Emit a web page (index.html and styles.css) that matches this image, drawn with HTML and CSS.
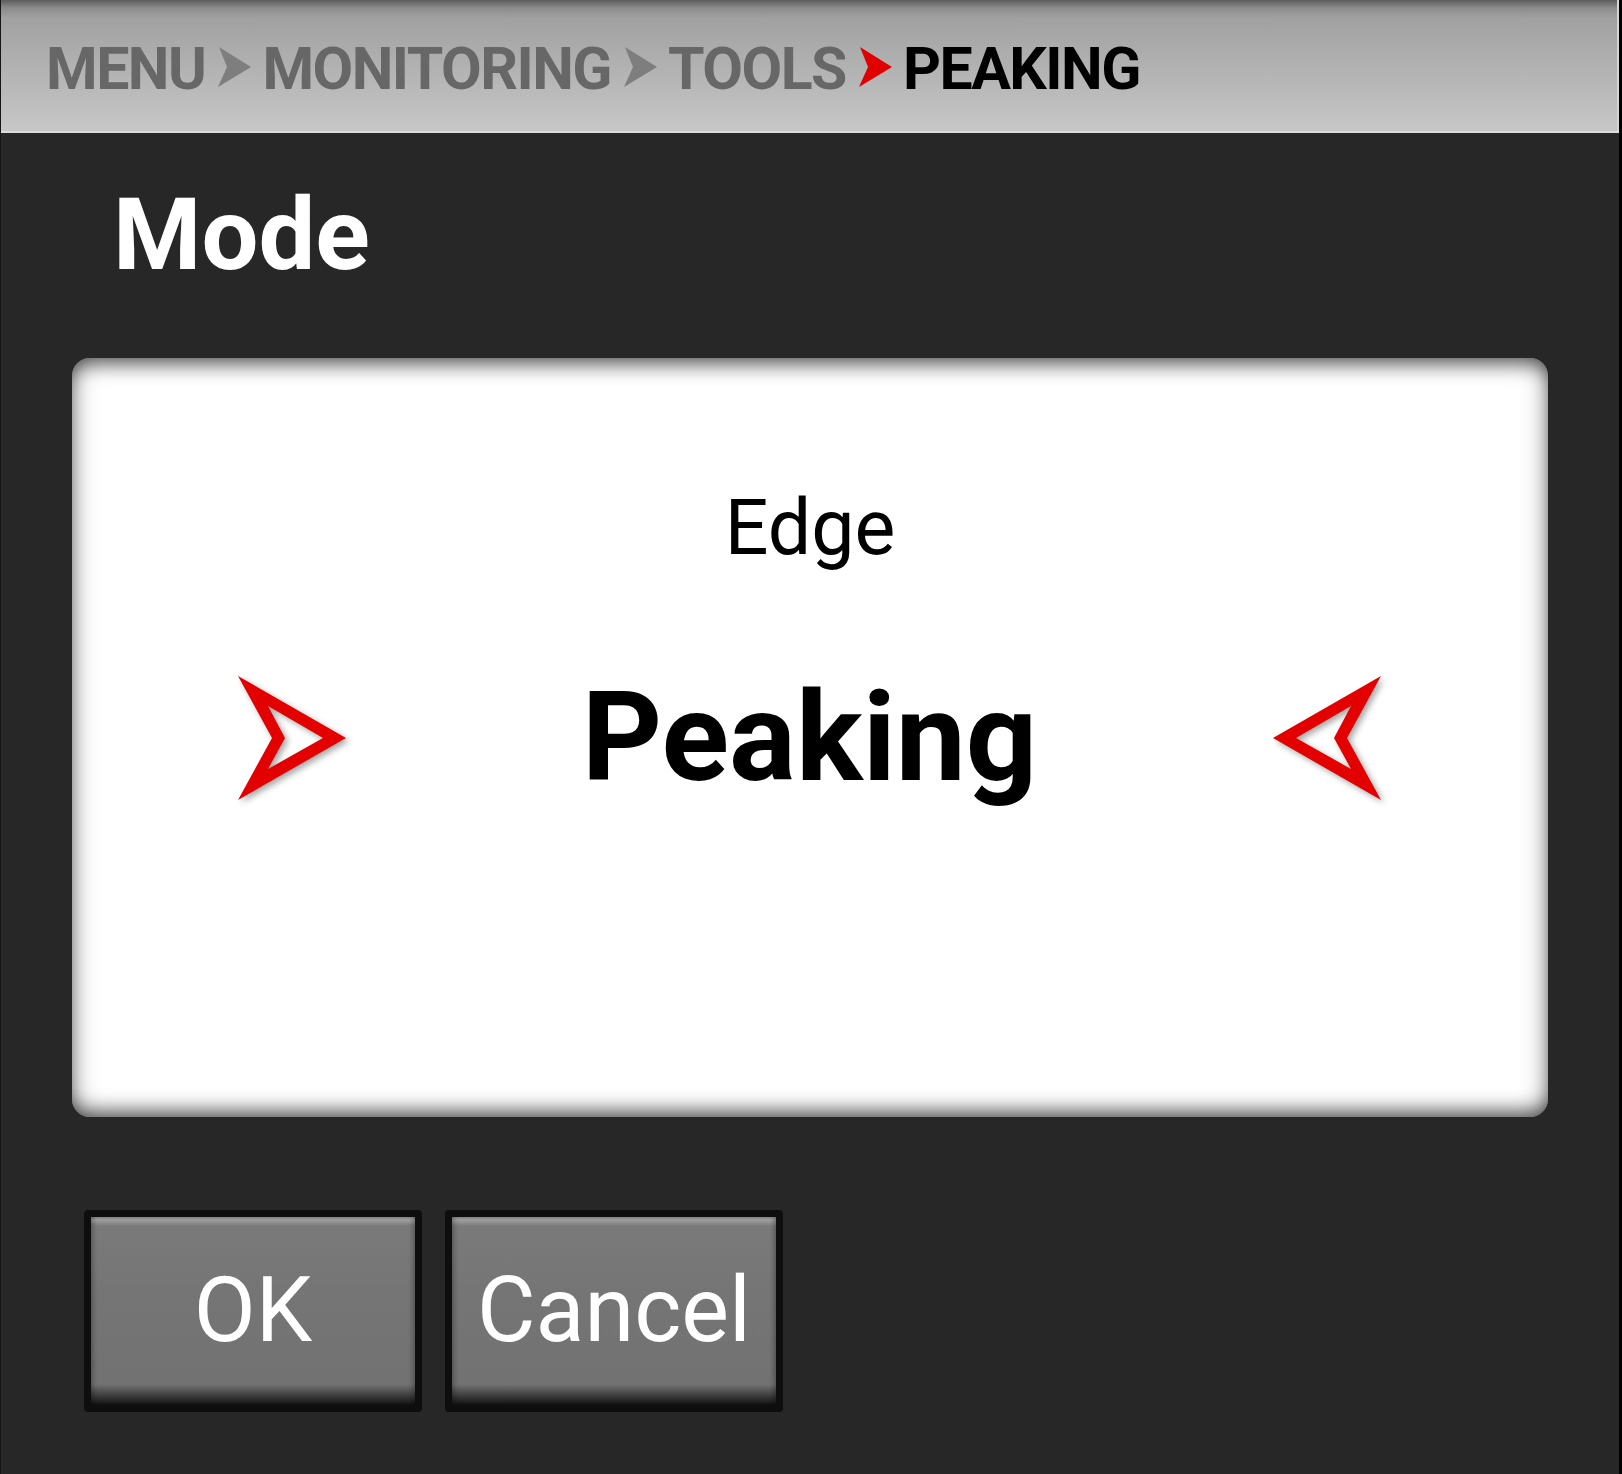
FILE: index.html
```html
<!DOCTYPE html>
<html lang="en">
<head>
  <meta charset="UTF-8">
  <meta name="viewport" content="width=device-width, initial-scale=1.0">
  <title>Peaking Mode</title>
  <link rel="stylesheet" href="styles.css">
</head>
<body>
  <div class="screen">
    <div class="crumbs">
      <span class="crumb">MENU</span>
      <svg class="sep" viewBox="0 0 33 40" width="33" height="40"><polygon points="1,0 33,20 0,40 9,20"/></svg>
      <span class="crumb">MONITORING</span>
      <svg class="sep" viewBox="0 0 33 40" width="33" height="40"><polygon points="1,0 33,20 0,40 9,20"/></svg>
      <span class="crumb">TOOLS</span>
      <svg class="sep sep-current" viewBox="0 0 33 40" width="33" height="40"><polygon points="1,0 33,20 0,40 9,20"/></svg>
      <span class="crumb crumb-current">PEAKING</span>
    </div>

    <div class="content">
      <h1 class="title">Mode</h1>

      <div class="picker">
        <div class="option">Edge</div>
        <div class="picker-row">
          <svg class="arrow" viewBox="0 0 108 124" width="108" height="124">
            <path fill-rule="evenodd" d="M0 0 L108 62 L0 124 L34 62 Z M30 30 L47 62 L30 93 L85 62 Z"/>
          </svg>
          <div class="selected">Peaking</div>
          <svg class="arrow" viewBox="0 0 108 124" width="108" height="124">
            <path fill-rule="evenodd" d="M108 0 L0 62 L108 124 L74 62 Z M78 30 L61 62 L78 93 L23 62 Z"/>
          </svg>
        </div>
      </div>

      <div class="buttons">
        <button class="btn">OK</button>
        <button class="btn">Cancel</button>
      </div>
    </div>
  </div>
</body>
</html>
```

FILE: styles.css
```css
body {
  margin: 0;
  padding: 0;
  background-color: #000;
  font-family: Roboto, "Liberation Sans", sans-serif;
}
.screen {
  width: 1622px;
  height: 1474px;
  box-sizing: border-box;
  border-left: 1px solid #151515;
  border-right: 3px solid #000;
  background-color: #272727;
}

/* breadcrumb bar */
.crumbs {
  height: 133px;
  box-sizing: border-box;
  padding: 39px 0 0 45px;
  display: flex;
  align-items: center;
  align-content: flex-start;
  flex-wrap: wrap;
  background: linear-gradient(to bottom, #5c5c5c 0, #8c8c8c 8px, #a1a1a1 18px, #c7c7c7 131px);
  border-bottom: 2px solid #dcdcdc;
  box-shadow: inset -2px 0 0 #d4d4d4;
}
.crumb {
  font-size: 59px;
  font-weight: bold;
  line-height: 59px;
  letter-spacing: -1.5px;
  color: #676767;
}
.crumb-current {
  color: #000;
}
.sep {
  fill: #7e7e7e;
  margin: 0 11px 4px 13px;
}
.sep-current {
  fill: #e10000;
}

/* page body */
.content {
  padding: 0 71px;
}
.title {
  margin: 51px 0 0 0;
  padding-left: 41px;
  font-size: 101px;
  line-height: 101px;
  font-weight: bold;
  color: #fff;
}

.picker {
  margin-top: 73px;
  height: 759px;
  box-sizing: border-box;
  padding-top: 132px;
  background-color: #fff;
  border-radius: 18px;
  box-shadow: inset 0 0 26px rgba(0, 0, 0, 0.45),
              inset 0 14px 20px -10px rgba(0, 0, 0, 0.55),
              inset 0 -14px 20px -10px rgba(0, 0, 0, 0.55);
}
.option {
  text-align: center;
  font-size: 77px;
  line-height: 77px;
  color: #000;
}
.picker-row {
  margin-top: 106px;
  padding: 0 167px 0 166px;
  display: flex;
  justify-content: space-between;
  align-items: center;
}
.selected {
  font-size: 125px;
  line-height: 129px;
  font-weight: bold;
  color: #000;
}
.arrow {
  fill: #e30000;
  filter: drop-shadow(3px 3px 3px rgba(0, 0, 0, 0.35));
}

/* buttons */
.buttons {
  margin: 93px 0 0 12px;
  display: flex;
  gap: 23px;
}
.btn {
  width: 338px;
  height: 202px;
  box-sizing: border-box;
  padding: 0;
  border: 7px solid #0e0e0e;
  border-radius: 4px;
  background: linear-gradient(to bottom, #8a8a8a 0, #9e9e9e 3px, #7a7a7a 9px, #757575 40%, #727272 89%, #111 100%);
  box-shadow: inset 5px 0 5px -3px rgba(0, 0, 0, 0.3), inset -5px 0 5px -3px rgba(0, 0, 0, 0.3);
  font-family: Roboto, "Liberation Sans", sans-serif;
  font-size: 90px;
  line-height: 90px;
  color: #fff;
  display: flex;
  align-items: center;
  justify-content: center;
}
```
